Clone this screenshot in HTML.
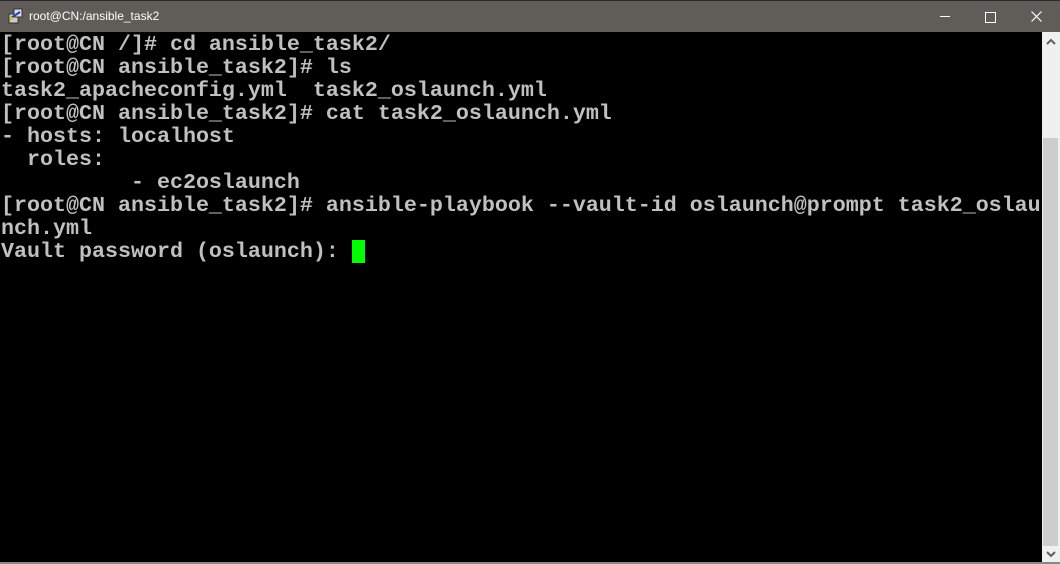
<!DOCTYPE html>
<html><head><style>
html,body{margin:0;padding:0;width:1060px;height:564px;overflow:hidden;background:#000}
.tb{position:absolute;left:0;top:0;width:1060px;height:32px;background:#605c58;border-top:1px solid #2a2a2a;box-sizing:border-box}
.title{position:absolute;left:29px;top:8px;font:12px "Liberation Sans",sans-serif;color:#fff}
.term{position:absolute;left:1px;top:33px;width:1041px;height:529px;font:bold 21.67px/23px "Liberation Mono",monospace;color:#c0c0c0;white-space:pre;overflow:hidden}
.cur{position:absolute;left:352px;top:240px;width:13px;height:23px;background:#00ff00}
.sb{position:absolute;left:1042px;top:32px;width:18px;height:530px;background:#f0f0f0}
.thumb{position:absolute;left:1043px;top:138px;width:15px;height:408px;background:#cdcdcd}
.bot{position:absolute;left:0;top:562px;width:1060px;height:2px;background:#888}
</style></head><body>
<div class="tb">
<svg style="position:absolute;left:8px;top:7px" width="16" height="16" viewBox="0 0 16 16"><rect x="1" y="6" width="9" height="9" fill="#ccc" stroke="#333"/><rect x="6" y="1" width="8" height="8" fill="#ddd" stroke="#333"/><path d="M3 10 L12 4" stroke="#2040c0" stroke-width="2"/><rect x="2" y="9" width="3" height="3" fill="#e0c000"/></svg>
<div class="title">root@CN:/ansible_task2</div>
<div style="position:absolute;left:940px;top:15px;width:10px;height:1px;background:#fff"></div>
<div style="position:absolute;left:985px;top:11px;width:9px;height:9px;border:1px solid #fff"></div>
<svg style="position:absolute;left:1031px;top:10px" width="11" height="11"><path d="M0.5 0.5L10.5 10.5M10.5 0.5L0.5 10.5" stroke="#fff" stroke-width="1.2"/></svg>
</div>
<div class="term">[root@CN /]# cd ansible_task2/
[root@CN ansible_task2]# ls
task2_apacheconfig.yml  task2_oslaunch.yml
[root@CN ansible_task2]# cat task2_oslaunch.yml
- hosts: localhost
  roles:
          - ec2oslaunch
[root@CN ansible_task2]# ansible-playbook --vault-id oslaunch@prompt task2_oslau
nch.yml
Vault password (oslaunch): </div>
<div class="cur"></div>
<div class="sb"></div>
<div class="thumb"></div>
<svg style="position:absolute;left:1046px;top:38px" width="10" height="8"><path d="M1 6L5 2L9 6" stroke="#606060" stroke-width="2" fill="none"/></svg>
<svg style="position:absolute;left:1046px;top:550px" width="10" height="8"><path d="M1 2L5 6L9 2" stroke="#606060" stroke-width="2" fill="none"/></svg>
<div class="bot"></div>
</body></html>
